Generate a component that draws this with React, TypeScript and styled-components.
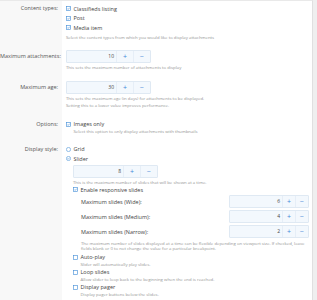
import styled, { createGlobalStyle } from "styled-components";

const Global = createGlobalStyle`
  html, body {
    margin: 0;
    padding: 0;
    background: #efefef;
  }
  body {
    font-family: "Open Sans", "Liberation Sans", sans-serif;
  }
`;

const Panel = styled.div`
  width: 313px;
  height: 300px;
  box-sizing: border-box;
  overflow: hidden;
  padding: 3px 3px 0 0;
  background: linear-gradient(to right, #f8f8f8 62px, #ffffff 62px);
  border-top: 1px solid #e9e9e9;
  border-right: 1px solid #e0e0e0;
`;

const Row = styled.div<{ $gap?: number }>`
  display: grid;
  grid-template-columns: 62px 1fr;
  padding-bottom: ${(p) => p.$gap ?? 9.5}px;
`;

const Label = styled.div<{ $lh: number }>`
  text-align: right;
  padding-right: 4px;
  font-size: 5.5px;
  color: #555;
  line-height: ${(p) => p.$lh}px;
  white-space: nowrap;
`;

const Field = styled.div`
  padding-left: 4px;
  min-width: 0;
`;

const Option = styled.div<{ $h?: number }>`
  display: flex;
  align-items: center;
  gap: 2.5px;
  height: ${(p) => p.$h ?? 9.5}px;
  font-size: 5.5px;
  color: #444;
  white-space: nowrap;
`;

const Help = styled.div<{ $lh?: number; $top?: number }>`
  font-size: 4.3px;
  line-height: ${(p) => p.$lh ?? 7}px;
  color: #959595;
  margin-top: ${(p) => p.$top ?? 1}px;
  white-space: nowrap;
`;

const Stepper = styled.div<{ $w: number }>`
  display: flex;
  width: ${(p) => p.$w}px;
  height: 13px;
  box-sizing: border-box;
  border: 1px solid #dfe9f3;
  background: #f3f8fd;
  border-radius: 1px;
`;

const Value = styled.div`
  flex: 1;
  text-align: right;
  padding-right: 2px;
  font-size: 5px;
  line-height: 11px;
  color: #444;
`;

const StepButton = styled.div<{ $w: number }>`
  width: ${(p) => p.$w}px;
  display: flex;
  align-items: center;
  justify-content: center;
  color: #3d8bd9;
  font-size: 7px;
  line-height: 11px;
  border-left: 1px solid #e6eef7;
`;

const Sub = styled.div`
  margin-left: 7px;
  margin-top: 1.5px;
`;

const Responsive = styled.div`
  margin-left: 8px;
  margin-top: 2px;
`;

const SlideRow = styled.div`
  display: flex;
  align-items: center;
  justify-content: space-between;
  margin-top: 2px;
  font-size: 5.5px;
  color: #444;
  white-space: nowrap;
`;

const Item = styled.div`
  margin-top: 2px;
`;

const ItemHelp = styled.div`
  font-size: 4.3px;
  line-height: 6px;
  color: #959595;
  padding-left: 7.5px;
  white-space: nowrap;
`;

function CheckBox({ checked = false }: { checked?: boolean }) {
  return (
    <svg width="5" height="5" viewBox="0 0 10 10">
      <rect x="0.75" y="0.75" width="8.5" height="8.5" fill="#fff" stroke="#4c93d9" strokeWidth="1.3" />
      {checked && <path d="M2.6 5.1 L4.3 6.8 L7.5 3.3" fill="none" stroke="#4c93d9" strokeWidth="1.3" />}
    </svg>
  );
}

function Radio({ checked = false }: { checked?: boolean }) {
  return (
    <svg width="5" height="5" viewBox="0 0 10 10">
      <circle cx="5" cy="5" r="4.2" fill="#fff" stroke="#4c93d9" strokeWidth="1.2" />
      {checked && <path d="M2.9 5.1 L4.4 6.5 L7.2 3.6" fill="none" stroke="#4c93d9" strokeWidth="1.2" />}
    </svg>
  );
}

function NumberField({ value, w = 85, btn = 16 }: { value: number; w?: number; btn?: number }) {
  return (
    <Stepper $w={w}>
      <Value>{value}</Value>
      <StepButton $w={btn}>+</StepButton>
      <StepButton $w={btn}>−</StepButton>
    </Stepper>
  );
}

export default function App() {
  return (
    <>
      <Global />
      <Panel>
        <Row>
          <Label $lh={9.5}>Content types:</Label>
          <Field>
            <Option><CheckBox checked />Classifieds listing</Option>
            <Option><CheckBox checked />Post</Option>
            <Option><CheckBox checked />Media item</Option>
            <Help>Select the content types from which you would like to display attachments</Help>
          </Field>
        </Row>
        <Row>
          <Label $lh={13}>Maximum attachments:</Label>
          <Field>
            <NumberField value={10} />
            <Help>This sets the maximum number of attachments to display</Help>
          </Field>
        </Row>
        <Row $gap={12}>
          <Label $lh={13}>Maximum age:</Label>
          <Field>
            <NumberField value={30} />
            <Help>
              This sets the maximum age (in days) for attachments to be displayed.
              <br />
              Setting this to a lower value improves performance.
            </Help>
          </Field>
        </Row>
        <Row $gap={11}>
          <Label $lh={7}>Options:</Label>
          <Field>
            <Option $h={7}><CheckBox checked />Images only</Option>
            <ItemHelp>Select this option to only display attachments with thumbnails</ItemHelp>
          </Field>
        </Row>
        <Row $gap={0}>
          <Label $lh={9.5}>Display style:</Label>
          <Field>
            <Option><Radio />Grid</Option>
            <Option><Radio checked />Slider</Option>
            <Sub>
              <NumberField value={8} />
              <Help>This is the maximum number of slides that will be shown at a time.</Help>
              <Option $h={7}><CheckBox checked />Enable responsive slides</Option>
              <Responsive>
                <SlideRow>Maximum slides (Wide):<NumberField value={6} w={80} btn={12} /></SlideRow>
                <SlideRow>Maximum slides (Medium):<NumberField value={4} w={80} btn={12} /></SlideRow>
                <SlideRow>Maximum slides (Narrow):<NumberField value={2} w={80} btn={12} /></SlideRow>
                <Help $lh={5.5} $top={2.5}>
                  The maximum number of slides displayed at a time can be flexible depending on viewport size. If checked, leave
                  <br />
                  fields blank or 0 to not change the value for a particular breakpoint.
                </Help>
              </Responsive>
              <Item>
                <Option $h={7}><CheckBox />Auto-play</Option>
                <ItemHelp>Slider will automatically play slides.</ItemHelp>
              </Item>
              <Item>
                <Option $h={7}><CheckBox />Loop slides</Option>
                <ItemHelp>Allow slider to loop back to the beginning when the end is reached.</ItemHelp>
              </Item>
              <Item>
                <Option $h={7}><CheckBox />Display pager</Option>
                <ItemHelp>Display pager buttons below the slides.</ItemHelp>
              </Item>
            </Sub>
          </Field>
        </Row>
      </Panel>
    </>
  );
}
